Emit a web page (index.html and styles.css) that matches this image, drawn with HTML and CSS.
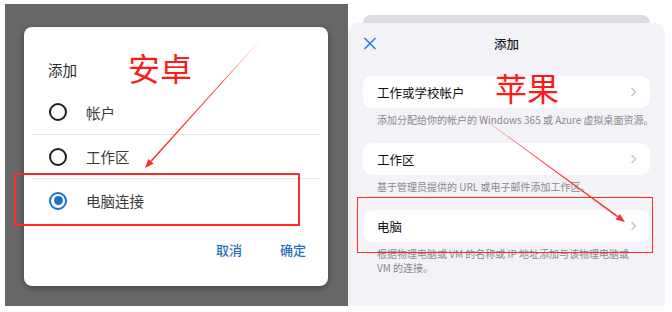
FILE: index.html
```html
<!DOCTYPE html>
<html>
<head>
    <meta charset="utf-8">
    <link rel="stylesheet" href="styles.css">
</head>

<body>
    <div class="page">
        <section class="android">
            <div class="dialog">
                <h2 class="dlg-title">添加</h2>
                <ul class="options">
                    <li class="option"><span class="radio"></span>帐户</li>
                    <li class="option"><span class="radio"></span>工作区</li>
                    <li class="option"><span class="radio checked"></span>电脑连接</li>
                </ul>
                <div class="actions">
                    <span class="btn">取消</span>
                    <span class="btn">确定</span>
                </div>
            </div>
        </section>

        <section class="ios">
            <div class="peek"></div>
            <div class="sheet">
                <header class="sheet-head">
                    <svg class="close" width="14" height="13" viewBox="0 0 14 13">
                        <path d="M1.5 1 L12.5 12 M12.5 1 L1.5 12"></path>
                    </svg>
                    <span class="sheet-title">添加</span>
                    <span></span>
                </header>

                <div class="group">
                    <div class="cell">工作或学校帐户
                        <svg class="chev" width="7" height="10" viewBox="0 0 7 10"><path d="M1.5 1 L5.5 5 L1.5 9"></path></svg>
                    </div>
                    <p class="note">添加分配给你的帐户的 Windows 365 或 Azure 虚拟桌面资源。</p>
                </div>
                <div class="group">
                    <div class="cell">工作区
                        <svg class="chev" width="7" height="10" viewBox="0 0 7 10"><path d="M1.5 1 L5.5 5 L1.5 9"></path></svg>
                    </div>
                    <p class="note">基于管理员提供的 URL 或电子邮件添加工作区。</p>
                </div>
                <div class="group">
                    <div class="cell">电脑
                        <svg class="chev" width="7" height="10" viewBox="0 0 7 10"><path d="M1.5 1 L5.5 5 L1.5 9"></path></svg>
                    </div>
                    <p class="note">根据物理电脑或 VM 的名称或 IP 地址添加与该物理电脑或<br>VM 的连接。</p>
                </div>
            </div>
        </section>

        <!-- red annotations drawn over the two screenshots -->
        <span class="label label-android">安卓</span>
        <span class="label label-ios">苹果</span>
        <div class="mark mark-android"></div>
        <div class="mark mark-ios"></div>
        <svg class="arrows" width="672" height="312" viewBox="0 0 672 312">
            <defs>
                <linearGradient id="fadeL" x1="262" y1="38" x2="150" y2="162" gradientUnits="userSpaceOnUse">
                    <stop offset="0" stop-color="#ff2a2a" stop-opacity="0.15"></stop>
                    <stop offset="0.35" stop-color="#ff2a2a" stop-opacity="1"></stop>
                </linearGradient>
                <linearGradient id="fadeR" x1="466" y1="106" x2="618" y2="216" gradientUnits="userSpaceOnUse">
                    <stop offset="0" stop-color="#ff2a2a" stop-opacity="0.35"></stop>
                    <stop offset="0.5" stop-color="#ff2a2a" stop-opacity="1"></stop>
                </linearGradient>
            </defs>
            <polygon fill="url(#fadeL)" points="262.1,38.1 151.6,161.8 150.4,160.8 261.9,37.9"></polygon>
            <polygon fill="#ff2a2a" points="145,168 153.6,163.6 148.4,159.0"></polygon>
            <polygon fill="url(#fadeR)" points="465.95,106.1 617.2,217.3 618.2,216.1 466.05,105.9"></polygon>
            <polygon fill="#ff2a2a" points="625,222 615.6,219.5 619.8,213.9"></polygon>
        </svg>
    </div>
</body>
</html>
```

FILE: styles.css
```css
body {
    margin: 0;
    background: #fff;
    font-family: "Noto Sans CJK SC", "Noto Sans", sans-serif;
}
.page {
    position: relative;
    display: flex;
    align-items: flex-start;
    width: 672px;
    height: 312px;
    overflow: hidden;
}

/* android dialog */
.android {
    box-sizing: border-box;
    width: 343px;
    height: 302px;
    margin: 4px 0 0 5px;
    padding: 23px 0 0 19px;
    background: #676767;
}
.dialog {
    width: 304px;
    background: #fff;
    border-radius: 8px;
    box-shadow: 0 2px 6px rgba(0, 0, 0, 0.35);
}
.dlg-title {
    margin: 0;
    padding: 33px 24px 0;
    font-size: 14.5px;
    font-weight: 400;
    line-height: 20px;
    color: #2b2b2b;
}
.options {
    list-style: none;
    margin: 10px 7px 0 8px;
    padding: 0;
}
.option {
    box-sizing: border-box;
    display: flex;
    align-items: center;
    gap: 19px;
    height: 44px;
    padding-left: 17px;
    font-size: 14.5px;
    color: #3a3a3a;
}
.option + .option {
    border-top: 1px solid #e6e6e6;
}
.radio {
    box-sizing: border-box;
    display: flex;
    align-items: center;
    justify-content: center;
    width: 18px;
    height: 18px;
    border: 2px solid #1e1e1e;
    border-radius: 50%;
}
.radio.checked {
    border-color: #1a73c9;
}
.radio.checked::after {
    content: "";
    width: 9px;
    height: 9px;
    border-radius: 50%;
    background: #1a73c9;
}
.actions {
    display: flex;
    justify-content: flex-end;
    gap: 38px;
    padding: 18px 22px 26px;
}
.btn {
    font-size: 13px;
    font-weight: 500;
    line-height: 20px;
    color: #1f6fb5;
}

/* ios sheet */
.ios {
    width: 317px;
    padding-top: 15px;
}
.peek {
    height: 8px;
    margin: 0 15px;
    background: #dcdcde;
    border-radius: 8px 8px 0 0;
}
.sheet {
    box-sizing: border-box;
    height: 283px;
    padding: 0 15px;
    background: #f2f2f7;
    border-radius: 10px 10px 0 0;
}
.sheet-head {
    display: grid;
    grid-template-columns: 1fr auto 1fr;
    align-items: center;
    height: 40px;
    margin-bottom: 13px;
}
.close {
    fill: none;
    stroke: #2a80e4;
    stroke-width: 1.6px;
}
.sheet-title {
    font-size: 12.5px;
    font-weight: 500;
    color: #1c1c1e;
}
.group + .group {
    margin-top: 16px;
}
.cell {
    display: flex;
    align-items: center;
    justify-content: space-between;
    height: 32px;
    padding: 0 13px 0 14px;
    background: #fff;
    border-radius: 9px;
    font-size: 12.5px;
    color: #111;
}
.chev {
    fill: none;
    stroke: #c4c4c8;
    stroke-width: 1.4px;
}
.note {
    margin: 0;
    padding: 5px 14px 0;
    font-size: 10px;
    line-height: 14px;
    white-space: nowrap;
    color: #8a8a8e;
}

/* annotations */
.label {
    position: absolute;
    font-size: 32px;
    line-height: 32px;
    color: #ff1a1a;
}
.label-android {
    left: 128px;
    top: 51px;
}
.label-ios {
    left: 495px;
    top: 71px;
}
.mark {
    position: absolute;
    box-sizing: border-box;
    border: 2px solid #ff2a2a;
}
.mark-android {
    left: 14px;
    top: 173px;
    width: 286px;
    height: 53px;
}
.mark-ios {
    left: 357px;
    top: 197px;
    width: 296px;
    height: 56px;
    border-width: 1.5px;
}
.arrows {
    position: absolute;
    left: 0;
    top: 0;
}
```
